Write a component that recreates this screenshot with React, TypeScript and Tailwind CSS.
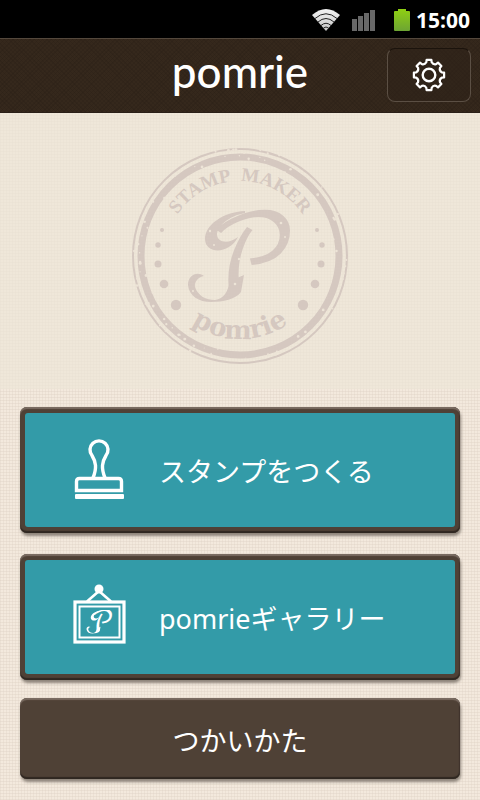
import React from 'react';

const SPECK_COUNT = 90;

// small deterministic scatter used for the worn ink effect
function noise(n: number) {
  const v = Math.sin(n * 127.1) * 43758.5453;
  return v - Math.floor(v);
}

const specks = Array.from({ length: SPECK_COUNT }, (_, i) => {
  const angle = noise(i + 1) * Math.PI * 2;
  const radius = 94 + noise(i + 200) * 15;
  return {
    x: 109 + Math.cos(angle) * radius,
    y: 109 + Math.sin(angle) * radius,
    r: 0.5 + noise(i + 400) * 1,
  };
});

function gearPath() {
  const point = (deg: number, r: number) => {
    const a = (deg * Math.PI) / 180;
    return `${(17 + Math.sin(a) * r).toFixed(2)} ${(17 - Math.cos(a) * r).toFixed(2)}`;
  };
  let d = '';
  for (let i = 0; i < 8; i++) {
    const a = i * 45;
    d += `${i === 0 ? 'M' : 'L'}${point(a - 9, 15.3)} L${point(a + 9, 15.3)} `;
    d += `L${point(a + 12, 13)} Q${point(a + 22.5, 11)} ${point(a + 33, 13)} `;
  }
  return d + 'Z';
}

function StatusBar() {
  return (
    <div className="flex h-[38px] items-center justify-end bg-black pt-[2px] pr-[10px] text-white">
      <svg className="h-[24px] w-[30px]" viewBox="0 0 30 24">
        <defs>
          <linearGradient id="wifi" x1="0" y1="0" x2="0" y2="1">
            <stop offset="0" stopColor="#f4f4f4" />
            <stop offset="1" stopColor="#c4c4c4" />
          </linearGradient>
        </defs>
        <path d="M1 7 Q15 -5 29 7 L15 23 Z" fill="url(#wifi)" />
        <g fill="none" stroke="#222" strokeWidth="1">
          <path d="M4 10.500 Q15 1 26 10.500" />
          <path d="M7 14 Q15 7 23 14" />
          <path d="M10 17.500 Q15 13 20 17.500" />
          <path d="M12.500 20 Q15 18 17.500 20" />
        </g>
      </svg>
      <svg className="ml-[11px] h-[22px] w-[23px] fill-[#686868]" viewBox="0 0 23 22">
        <rect x="0" y="10" width="5" height="12" />
        <rect x="6" y="7" width="5" height="15" />
        <rect x="12" y="4" width="5" height="18" />
        <rect x="18" y="1" width="5" height="21" />
      </svg>
      <svg className="ml-[19px] h-[22px] w-[16px]" viewBox="0 0 16 22">
        <defs>
          <linearGradient id="battery" x1="0" y1="0" x2="0" y2="1">
            <stop offset="0" stopColor="#8fd012" />
            <stop offset="1" stopColor="#6da433" />
          </linearGradient>
        </defs>
        <path d="M4 0H12V2H15Q16 2 16 3V21Q16 22 15 22H1Q0 22 0 21V3Q0 2 1 2H4Z" fill="url(#battery)" />
      </svg>
      <span className="ml-[6px] font-['Open_Sans',sans-serif] text-[21px] leading-[24px] font-bold">15:00</span>
    </div>
  );
}

function Header() {
  return (
    <header className="grid h-[75px] grid-cols-[1fr_auto_1fr] items-center border-t border-b border-t-[#54483c] border-b-[#2a2018] bg-[#35281c] bg-[repeating-linear-gradient(45deg,#2a1f1655_0_1px,transparent_1px_3px),repeating-linear-gradient(-45deg,#2a1f1655_0_1px,transparent_1px_3px)] px-[9px] pb-[2px]">
      <h1 className="col-start-2 pb-[8px] font-['Lato',sans-serif] text-[44px] leading-[52px] font-medium text-white">
        pomrie
      </h1>
      <button
        type="button"
        aria-label="設定"
        className="flex h-[54px] w-[84px] items-center justify-center justify-self-end rounded-lg border border-[#5b4f44] border-t-[#1b130c] bg-[#2d2118]/50"
      >
        <svg className="h-[34px] w-[34px] fill-none stroke-white" viewBox="0 0 34 34" strokeLinejoin="round">
          <path d={gearPath()} strokeWidth="2.2" />
          <circle cx="17" cy="17" r="6.300" strokeWidth="2.400" />
        </svg>
      </button>
    </header>
  );
}

// script initial with the two swashes of the brand mark
function Monogram() {
  return (
    <>
      <text
        x="122"
        y="146"
        className="font-['DejaVu_Math_TeX_Gyre',serif] text-[108px]"
        textAnchor="middle"
      >
        𝒫
      </text>
      <path d="M114 64 C92 65 74 78 74 92 C74 107 98 108 107 90 C98 97 87 96 86 88 C86 79 98 69 114 66 Z" />
      <path d="M113 128 L110 145 C105 152 92 155 80 155 C68 155 58 149 57 138 C57 128 66 124 73 129 C68 130 63 134 64 140 C67 149 75 153 84 153 C93 152 97 144 99 134 Z" />
    </>
  );
}

function Emblem() {
  return (
    <svg className="h-[218px] w-[218px] fill-current text-[#d5c8c0]" viewBox="0 0 218 218">
      <defs>
        <path id="arc-top" d="M34 109 A75 75 0 0 1 184 109" />
        <path id="arc-bottom" d="M25 108 A84 84 0 0 0 193 108" />
      </defs>
      <circle cx="109" cy="109" r="107" fill="none" stroke="currentColor" strokeWidth="2" />
      <circle cx="109" cy="109" r="99" fill="none" stroke="currentColor" strokeWidth="7" />
      <text className="font-['Liberation_Serif',serif] text-[19px] font-bold" textAnchor="middle">
        <textPath href="#arc-top" startOffset="50%">{'STAMP\u00a0 MAKER'}</textPath>
      </text>
      <text className="font-['DejaVu_Serif',serif] text-[26px] font-bold" textAnchor="middle">
        <textPath href="#arc-bottom" startOffset="50%">pomrie</textPath>
      </text>
      <Monogram />
      <circle cx="31" cy="83" r="2" />
      <circle cx="27" cy="98" r="2.700" />
      <circle cx="27" cy="117" r="3.500" />
      <circle cx="33" cy="137" r="4.300" />
      <circle cx="45" cy="158" r="5.200" />
      <circle cx="186" cy="83" r="2" />
      <circle cx="191" cy="98" r="2.700" />
      <circle cx="190" cy="117" r="3.500" />
      <circle cx="184" cy="137" r="4.300" />
      <circle cx="172" cy="158" r="5.200" />
      <g fill="#ede4d7">
        {specks.map((s, i) => (
          <circle key={i} cx={s.x} cy={s.y} r={s.r} />
        ))}
        <circle cx="79" cy="84" r="1.200" />
        <circle cx="83" cy="98" r="1" />
        <circle cx="150" cy="76" r="1.300" />
        <circle cx="154" cy="90" r="1" />
        <circle cx="108" cy="112" r="1.200" />
        <circle cx="104" cy="137" r="1.300" />
        <circle cx="62" cy="144" r="1" />
      </g>
    </svg>
  );
}

function StampIcon() {
  return (
    <svg className="h-[66px] w-[54px] fill-none stroke-white" viewBox="0 0 54 66" strokeWidth="3.400">
      <path d="M20 41 C24 31 23 25 19 18.500 A9 9 0 1 1 33 18.500 C29 25 28 31 32 41" />
      <path d="M3.500 53.500 V44.500 Q3.500 41.500 6.500 41.500 H45.500 Q48.500 41.500 48.500 44.500 V53.500 Z" />
      <rect x="2" y="57" width="49" height="5" rx="1" fill="#fff" stroke="none" />
    </svg>
  );
}

function GalleryIcon() {
  return (
    <svg className="h-[66px] w-[54px] fill-current text-white" viewBox="0 0 54 66">
      <circle cx="26" cy="5" r="4.500" />
      <g fill="none" stroke="currentColor">
        <path d="M14 17.500 L26 7 L38 17.500" strokeWidth="2.600" />
        <rect x="2" y="18" width="49" height="40" strokeWidth="3.200" />
        <rect x="6.500" y="22.500" width="40" height="31" strokeWidth="2" />
      </g>
      <svg x="13" y="26" width="27" height="24" viewBox="56 61 106 96">
        <Monogram />
      </svg>
    </svg>
  );
}

interface MenuButtonProps {
  icon: React.ReactNode;
  label: string;
}

function MenuButton({ icon, label }: MenuButtonProps) {
  return (
    <button
      type="button"
      className="rounded-[7px] bg-[#4f4136] px-[5px] py-[6px] shadow-[inset_0_2px_1px_#7a6c62,inset_0_-2px_1px_#2f2721,inset_-1px_0_1px_#3a2f28,1px_3px_3px_#8d847a]"
    >
      <span className="flex h-[114px] items-center gap-[32px] rounded-[3px] bg-[#339ba8] pl-[48px]">
        {icon}
        <span className="pt-[4px]">{label}</span>
      </span>
    </button>
  );
}

export default function App() {
  return (
    <div className="flex min-h-screen flex-col bg-[#f3e9dd] bg-[repeating-linear-gradient(90deg,#dccfc250_0_1px,transparent_1px_3px),repeating-linear-gradient(0deg,#dccfc260_0_1px,transparent_1px_3px)]">
      <StatusBar />
      <Header />
      <section className="flex justify-center bg-[#ede5d7]/70 pt-[34px] pb-[24px]">
        <Emblem />
      </section>
      <main className="flex flex-col px-[20px] pt-[18px] pb-[21px] font-['Noto_Sans','Noto_Sans_CJK_JP',sans-serif] text-[27px] leading-[36px] text-white">
        <div className="flex flex-col gap-[21px]">
          <MenuButton icon={<StampIcon />} label="スタンプをつくる" />
          <MenuButton icon={<GalleryIcon />} label="pomrieギャラリー" />
        </div>
        <button
          type="button"
          className="mt-[18px] h-[81px] rounded-[7px] bg-[#4f4136] pt-[4px] shadow-[inset_0_2px_1px_#7a6c62,inset_0_-2px_1px_#2f2721,inset_-1px_0_1px_#3a2f28,1px_3px_3px_#8d847a]"
        >
          つかいかた
        </button>
      </main>
    </div>
  );
}
